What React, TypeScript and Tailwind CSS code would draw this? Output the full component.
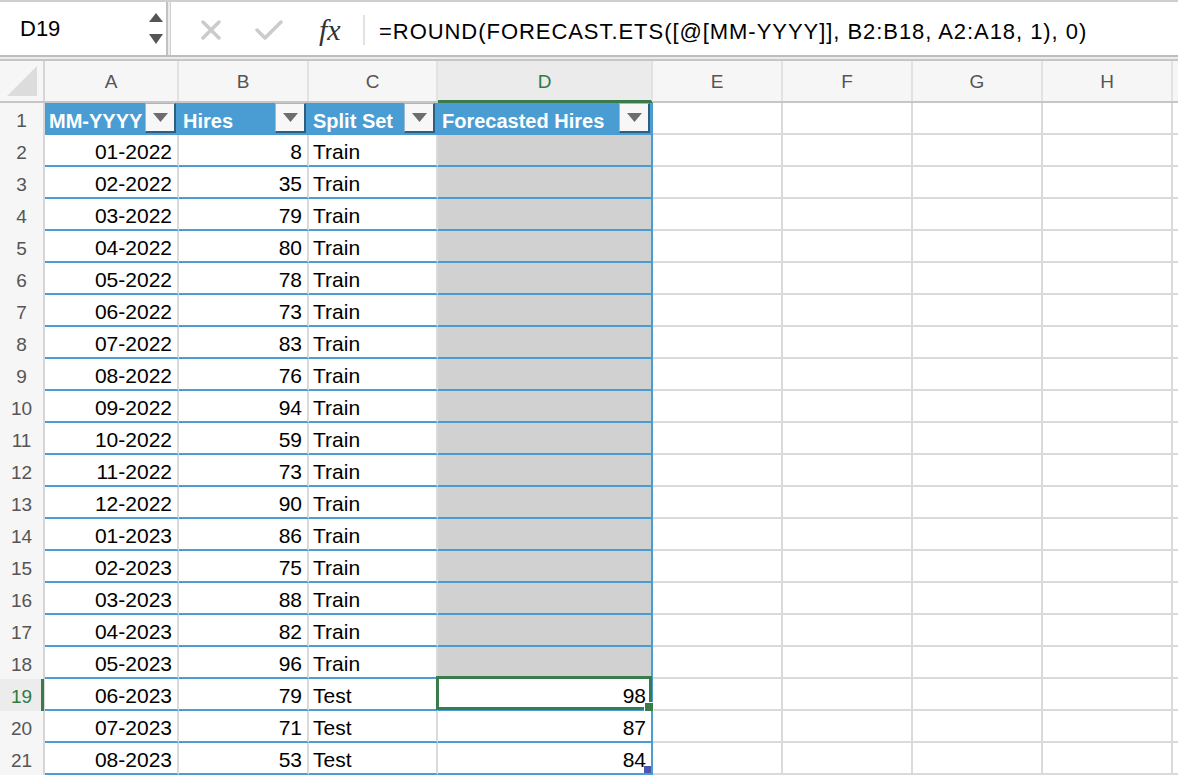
import React from "react";

type Row = [string, number, string, number | null];

const rows: Row[] = [
  ["01-2022", 8, "Train", null],
  ["02-2022", 35, "Train", null],
  ["03-2022", 79, "Train", null],
  ["04-2022", 80, "Train", null],
  ["05-2022", 78, "Train", null],
  ["06-2022", 73, "Train", null],
  ["07-2022", 83, "Train", null],
  ["08-2022", 76, "Train", null],
  ["09-2022", 94, "Train", null],
  ["10-2022", 59, "Train", null],
  ["11-2022", 73, "Train", null],
  ["12-2022", 90, "Train", null],
  ["01-2023", 86, "Train", null],
  ["02-2023", 75, "Train", null],
  ["03-2023", 88, "Train", null],
  ["04-2023", 82, "Train", null],
  ["05-2023", 96, "Train", null],
  ["06-2023", 79, "Test", 98],
  ["07-2023", 71, "Test", 87],
  ["08-2023", 53, "Test", 84],
];

function FilterButton() {
  return (
    <div className="ml-auto mr-[1px] w-[31px] h-[30px] shrink-0 flex items-center justify-center bg-[#f7f7f7] border-l border-t border-[#9cbbd0] border-r-2 border-b-2 border-r-[#2d5f80] border-b-[#2d5f80]">
      <svg width="15" height="9" viewBox="0 0 15 9">
        <path d="M0 0 H15 L7.5 9 Z" fill="#6d6d6d" />
      </svg>
    </div>
  );
}

function RowHeader({ n, active }: { n: number; active?: boolean }) {
  return (
    <div
      className={`relative w-[45px] h-[32px] shrink-0 flex items-center justify-center pt-[4px] text-[19px] border-r-2 border-[#d6d6d6] ${
        active ? "bg-[#ececec] text-[#2f7a43]" : "bg-[#f6f6f6] text-[#555]"
      }`}
    >
      {n}
      {active && <span className="absolute right-[-1px] top-0 bottom-0 w-[3px] bg-[#3a7a4b]" />}
    </div>
  );
}

export default function App() {
  const letters = ["A", "B", "C", "D", "E", "F", "G", "H"];
  const widths = ["w-[134px]", "w-[130px]", "w-[129px]", "w-[215px]", "w-[130px]", "w-[130px]", "w-[130px]", "w-[130px]"];

  return (
    <div className="w-[1178px] h-[780px] overflow-hidden bg-white font-['Liberation_Sans',Arial,sans-serif] text-black">
      {/* formula bar */}
      <div className="h-[57px] flex border-t-2 border-b-2 border-t-[#cfcfcf] border-b-[#bdbdbd] bg-[#fafafa]">
        <div className="w-[168px] flex items-center bg-white border-r-2 border-[#c2c2c2]">
          <span className="pl-[20px] text-[22px]">D19</span>
          <div className="ml-auto mr-[3px] flex flex-col gap-[12px]">
            <svg width="14" height="9" viewBox="0 0 14 9">
              <path d="M7 0 L14 9 H0 Z" fill="#555" />
            </svg>
            <svg width="14" height="10" viewBox="0 0 14 10">
              <path d="M0 0 H14 L7 10 Z" fill="#555" />
            </svg>
          </div>
        </div>
        <div className="w-[3px] bg-[#ececec] border-r border-[#cfcfcf]" />
        <div className="flex-1 flex items-center pt-[2px] bg-white">
          <svg className="ml-[30px]" width="20" height="20" viewBox="0 0 20 20">
            <path d="M2 2 L18 18 M18 2 L2 18" stroke="#cbcbcb" strokeWidth="3.5" strokeLinecap="round" />
          </svg>
          <svg className="ml-[34px]" width="28" height="20" viewBox="0 0 28 20">
            <path d="M2 10 L10 18 L26 2" stroke="#cbcbcb" strokeWidth="3.5" fill="none" strokeLinecap="round" strokeLinejoin="round" />
          </svg>
          <span className="ml-[36px] w-[30px] font-['Liberation_Serif',serif] italic text-[30px] text-[#333] leading-none">fx</span>
          <span className="ml-[14px] w-[2px] h-[30px] bg-[#e2e2e2]" />
          <span className="ml-[14px] pt-[4px] text-[22px] tracking-[0.95px] whitespace-nowrap">
            =ROUND(FORECAST.ETS([@[MM-YYYY]], B2:B18, A2:A18, 1), 0)
          </span>
        </div>
      </div>
      <div className="h-[2px] bg-[#ececec]" />

      {/* column headers */}
      <div className="h-[44px] flex border-t-2 border-b-2 border-t-[#c6c6c6] border-b-[#c6c6c6] bg-[#f6f6f6]">
        <div className="w-[45px] shrink-0 flex items-center justify-center border-r-2 border-[#d6d6d6]">
          <svg width="30" height="30" viewBox="0 0 30 30">
            <path d="M30 0 V30 H0 Z" fill="#dcdcdc" />
          </svg>
        </div>
        {letters.map((l, i) => (
          <div
            key={l}
            className={`${widths[i]} shrink-0 flex items-center justify-center pt-[2px] text-[19px] border-r-2 border-[#e2e2e2] ${
              l === "D" ? "bg-[#ebebeb] text-[#2f7a43] border-b-[3px] border-b-[#3a7a4b] -mb-[2px] pt-[3px]" : "text-[#555]"
            }`}
          >
            {l}
          </div>
        ))}
        <div className="flex-1" />
      </div>

      {/* table header row */}
      <div className="flex h-[32px]">
        <RowHeader n={1} />
        {[
          ["MM-YYYY", "w-[134px]"],
          ["Hires", "w-[130px]"],
          ["Split Set", "w-[129px]"],
          ["Forecasted Hires", "w-[215px]"],
        ].map(([t, w]) => (
          <div
            key={t}
            className={`${w} shrink-0 flex items-start bg-[#4a9dd3] border-r-2 border-[#4a9dd3] text-white font-bold text-[20px]`}
          >
            <span className="pl-[4px] pt-[3px] h-[32px] flex items-center whitespace-nowrap">{t}</span>
            <FilterButton />
          </div>
        ))}
        {[0, 1, 2, 3].map((i) => (
          <div key={i} className="w-[130px] shrink-0 border-r-2 border-b-2 border-[#dadada]" />
        ))}
        <div className="flex-1 border-b-2 border-[#dadada]" />
      </div>

      {/* body rows */}
      {rows.map(([date, hires, split, fc], idx) => {
        const n = idx + 2;
        const sel = n === 19;
        return (
          <div key={n} className="flex h-[32px] text-[21px]">
            <RowHeader n={n} active={sel} />
            <div className="w-[134px] shrink-0 flex items-center justify-end pt-[4px] pr-[5px] border-r-2 border-r-[#dadada] border-b-2 border-b-[#4a9dd3]">
              {date}
            </div>
            <div className="w-[130px] shrink-0 flex items-center justify-end pt-[4px] pr-[5px] border-r-2 border-r-[#dadada] border-b-2 border-b-[#4a9dd3]">
              {hires}
            </div>
            <div className="w-[129px] shrink-0 flex items-center pt-[4px] pl-[4px] border-r-2 border-r-[#dadada] border-b-2 border-b-[#4a9dd3]">
              {split}
            </div>
            <div
              className={`relative w-[215px] shrink-0 flex items-center justify-end pt-[4px] pr-[5px] border-r-2 border-b-2 border-[#4a9dd3] ${
                fc === null ? "bg-[#d1d1d1]" : "bg-white"
              }`}
            >
              {fc}
              {sel && (
                <>
                  <span className="absolute -top-[3px] -left-[2px] -right-[1px] -bottom-[1px] border-[3px] border-[#3a7a4b]" />
                  <span className="absolute -right-[3px] -bottom-[3px] w-[10px] h-[10px] bg-[#3a7a4b] border border-white" />
                </>
              )}
              {n === 21 && <span className="absolute right-[0px] bottom-[0px] w-[7px] h-[7px] bg-[#4c56ad]" />}
            </div>
            {[0, 1, 2, 3].map((i) => (
              <div key={i} className="w-[130px] shrink-0 border-r-2 border-b-2 border-[#dadada]" />
            ))}
            <div className="flex-1 border-b-2 border-[#dadada]" />
          </div>
        );
      })}
    </div>
  );
}
